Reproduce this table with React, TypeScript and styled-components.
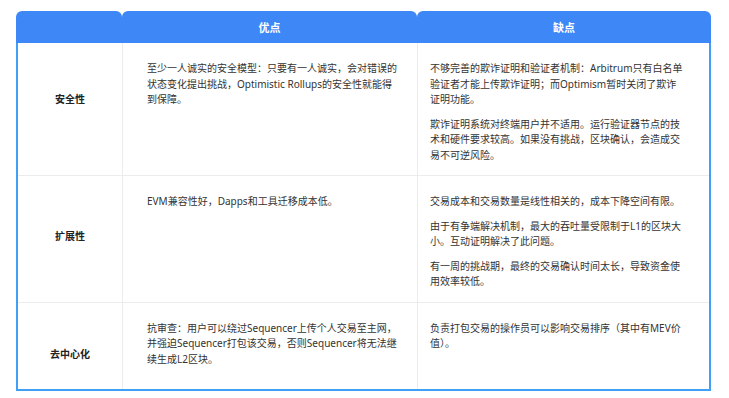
import styled, { createGlobalStyle } from 'styled-components';

interface RowData {
  label: string;
  labelShift: number;
  pros: string[];
  cons: string[];
}

const rows: RowData[] = [
  {
    label: '安全性',
    labelShift: -11,
    pros: [
      '至少一人诚实的安全模型：只要有一人诚实，会对错误的\n状态变化提出挑战，Optimistic Rollups的安全性就能得\n到保障。',
    ],
    cons: [
      '不够完善的欺诈证明和验证者机制：Arbitrum只有白名单\n验证者才能上传欺诈证明；而Optimism暂时关闭了欺诈\n证明功能。',
      '欺诈证明系统对终端用户并不适用。运行验证器节点的技\n术和硬件要求较高。如果没有挑战，区块确认，会造成交\n易不可逆风险。',
    ],
  },
  {
    label: '扩展性',
    labelShift: -3,
    pros: ['EVM兼容性好，Dapps和工具迁移成本低。'],
    cons: [
      '交易成本和交易数量是线性相关的，成本下降空间有限。',
      '由于有争端解决机制，最大的吞吐量受限制于L1的区块大\n小。互动证明解决了此问题。',
      '有一周的挑战期，最终的交易确认时间太长，导致资金使\n用效率较低。',
    ],
  },
  {
    label: '去中心化',
    labelShift: 8,
    pros: [
      '抗审查：用户可以绕过Sequencer上传个人交易至主网，\n并强迫Sequencer打包该交易，否则Sequencer将无法继\n续生成L2区块。',
    ],
    cons: ['负责打包交易的操作员可以影响交易排序（其中有MEV价\n值）。'],
  },
];

export default function App() {
  return (
    <>
      <GlobalStyle />
      <Page>
        <Table>
          <HeaderRow>
            <HeaderCell />
            <HeaderCell>优点</HeaderCell>
            <HeaderCell>缺点</HeaderCell>
          </HeaderRow>
          <Body>
            {rows.map((row) => (
              <Row key={row.label}>
                <LabelCell $shift={row.labelShift}>{row.label}</LabelCell>
                <TextCell $left={24} $top={18}>
                  {row.pros.map((p) => (
                    <Para key={p}>{p}</Para>
                  ))}
                </TextCell>
                <TextCell $left={12} $top={18}>
                  {row.cons.map((p) => (
                    <Para key={p}>{p}</Para>
                  ))}
                </TextCell>
              </Row>
            ))}
          </Body>
        </Table>
      </Page>
    </>
  );
}

const GlobalStyle = createGlobalStyle`
  body {
    margin: 0;
    background: #ffffff;
    font-family: "Noto Sans", "Noto Sans CJK SC", sans-serif;
  }
`;

const Page = styled.div`
  padding: 11px 0 0 16px;
`;

const Table = styled.div`
  width: 695px;
`;

const HeaderRow = styled.div`
  display: grid;
  grid-template-columns: 106px 295px 294px;
  height: 32px;
`;

const HeaderCell = styled.div`
  display: flex;
  align-items: center;
  justify-content: center;
  background: #3d87f6;
  border-radius: 6px 6px 0 0;
  color: #ffffff;
  font-size: 11px;
  font-weight: 700;
`;

const Body = styled.div`
  border: 2px solid #3fa0f6;
  border-top: none;
`;

const Row = styled.div`
  display: grid;
  grid-template-columns: 104px 295px 292px;
  min-height: 86px;

  & + & {
    border-top: 1px solid #ececec;
  }
`;

const LabelCell = styled.div<{ $shift: number }>`
  display: flex;
  align-items: center;
  justify-content: center;
  padding-top: ${({ $shift }) => Math.max(0, $shift * 2)}px;
  padding-bottom: ${({ $shift }) => Math.max(0, -$shift * 2)}px;
  font-size: 10px;
  font-weight: 700;
  color: #222222;
`;

const TextCell = styled.div<{ $left: number; $top: number }>`
  border-left: 1px solid #ececec;
  padding: ${({ $top }) => $top}px 0 12px ${({ $left }) => $left}px;
  font-size: 10px;
  line-height: 15.5px;
  color: #333333;
  overflow: hidden;
`;

const Para = styled.p`
  margin: 0 0 9px;
  white-space: pre;

  &:last-child {
    margin-bottom: 0;
  }
`;
